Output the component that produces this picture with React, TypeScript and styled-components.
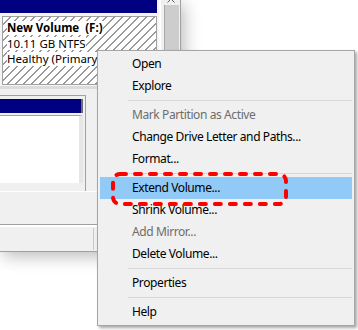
import styled, { createGlobalStyle } from 'styled-components';

const GlobalStyle = createGlobalStyle`
  html, body {
    margin: 0;
    padding: 0;
    background: #ffffff;
  }
  body {
    width: 358px;
    height: 330px;
    overflow: hidden;
  }
`;

type Item =
  | { kind: 'item'; label: string; disabled?: boolean; active?: boolean }
  | { kind: 'sep' };

const menuItems: Item[] = [
  { kind: 'item', label: 'Open' },
  { kind: 'item', label: 'Explore' },
  { kind: 'sep' },
  { kind: 'item', label: 'Mark Partition as Active', disabled: true },
  { kind: 'item', label: 'Change Drive Letter and Paths...' },
  { kind: 'item', label: 'Format...' },
  { kind: 'sep' },
  { kind: 'item', label: 'Extend Volume...', active: true },
  { kind: 'item', label: 'Shrink Volume...' },
  { kind: 'item', label: 'Add Mirror...', disabled: true },
  { kind: 'item', label: 'Delete Volume...' },
  { kind: 'sep' },
  { kind: 'item', label: 'Properties' },
  { kind: 'sep' },
  { kind: 'item', label: 'Help' },
];

export default function App(): JSX.Element {
  return (
    <>
      <GlobalStyle />
      <Stage>
        <Window>
          <TopPane>
            <DiskColumn>
              <NavyBar />
              <Partition>
                <PartLine $bold>New Volume&nbsp; (F:)</PartLine>
                <PartLine>10.11 GB NTFS</PartLine>
                <PartLine>Healthy (Primary Partition)</PartLine>
              </Partition>
            </DiskColumn>
            <ScrollBar>
              <ArrowUp viewBox="0 0 8 5" aria-hidden>
                <path d="M0.5 4.5 L4 1 L7.5 4.5" fill="none" stroke="#606060" strokeWidth="1" />
              </ArrowUp>
              <Thumb />
            </ScrollBar>
          </TopPane>

          <LowerPane>
            <ListFrame>
              <ListHeader />
              <ListBody />
            </ListFrame>
            <Gap />
            <StatusBar>
              <StatusCell />
            </StatusBar>
          </LowerPane>
        </Window>

        <ContextMenu>
          {menuItems.map((item, i) =>
            item.kind === 'sep' ? (
              <Separator key={i} />
            ) : (
              <MenuItem key={i} $disabled={item.disabled} $active={item.active}>
                {item.label}
              </MenuItem>
            )
          )}
        </ContextMenu>

        <Callout width="177" height="34" viewBox="0 0 177 34" aria-hidden>
          <rect
            x="2"
            y="2"
            width="173"
            height="30"
            rx="7"
            fill="none"
            stroke="#ff0000"
            strokeWidth="4"
            strokeDasharray="6 9"
            strokeLinecap="round"
          />
        </Callout>
      </Stage>
    </>
  );
}

const Stage = styled.div`
  position: relative;
  width: 358px;
  height: 330px;
  overflow: hidden;
  background: #ffffff;
`;

const Window = styled.div`
  width: 181px;
  height: 251px;
  display: flex;
  flex-direction: column;
  background: #f0f0f0;
  border-bottom: 1px solid #a0a0a0;
  box-shadow: 3px 4px 16px rgba(0, 0, 0, 0.28);
`;

const TopPane = styled.div`
  display: flex;
  height: 89px;
`;

const DiskColumn = styled.div`
  width: 159px;
  display: flex;
  flex-direction: column;
  background: #f4f4f4;
  border-bottom: 3px solid #dcdcdc;
  box-sizing: border-box;
`;

const NavyBar = styled.div`
  width: 157px;
  height: 13px;
  background: #000080;
  margin-bottom: 3px;
`;

const Partition = styled.div`
  margin-left: 2px;
  width: 155px;
  height: 69px;
  box-sizing: border-box;
  border: 1px solid #a0a0a0;
  padding: 4px 0 0 4px;
  overflow: hidden;
  display: flex;
  flex-direction: column;
  align-items: flex-start;
  gap: 2px;
  background: repeating-linear-gradient(
    135deg,
    #ffffff 0px,
    #ffffff 4.6px,
    #9a9a9a 4.6px,
    #9a9a9a 5.66px
  );
`;

const PartLine = styled.span<{ $bold?: boolean }>`
  font-family: 'Noto Sans', 'Liberation Sans', sans-serif;
  font-size: 11.5px;
  line-height: 13.5px;
  font-weight: ${({ $bold }) => ($bold ? 700 : 400)};
  color: #000;
  background: #ffffff;
  white-space: nowrap;
`;

const ScrollBar = styled.div`
  width: 22px;
  box-sizing: border-box;
  background: #f0f0f0;
  border-left: 2px solid #ffffff;
  border-right: 1px solid #a0a0a0;
  display: flex;
  flex-direction: column;
  align-items: center;
`;

const ArrowUp = styled.svg`
  width: 8px;
  height: 5px;
  margin-top: -2px;
`;

const Thumb = styled.div`
  margin-top: 2px;
  width: 14px;
  flex: 1;
  background: #cdcdcd;
  border-left: 1px solid #a8a8a8;
  margin-left: 1px;
`;

const LowerPane = styled.div`
  flex: 1;
  display: flex;
  flex-direction: column;
  padding-top: 6px;
`;

const ListFrame = styled.div`
  width: 86px;
  height: 96px;
  box-sizing: border-box;
  border-top: 1px solid #a0a0a0;
  border-right: 1px solid #a0a0a0;
  padding: 3px 2px 0 0;
  display: flex;
  flex-direction: column;
`;

const ListHeader = styled.div`
  width: 81px;
  height: 14px;
  background: #000080;
  border-right: 2px solid #6d6d6d;
`;

const ListBody = styled.div`
  margin-top: 2px;
  width: 79px;
  height: 67px;
  background: #ffffff;
  border-top: 1px solid #a0a0a0;
  border-right: 4px solid #e6e6e6;
`;

const Gap = styled.div`
  height: 33px;
  border-bottom: 1px solid #a0a0a0;
  box-shadow: inset 0 14px 0 -13px #ffffff;
`;

const StatusBar = styled.div`
  flex: 1;
  border-top: 2px solid #ffffff;
  display: flex;
`;

const StatusCell = styled.div`
  width: 93px;
  border-right: 1px solid #c8c8c8;
  margin: 1px 0;
`;

const ContextMenu = styled.div`
  position: absolute;
  left: 97px;
  top: 50px;
  width: 258px;
  box-sizing: border-box;
  padding: 2px;
  background: #f0f0f0;
  border: 1px solid #a6a6a6;
  box-shadow: 2px 2px 3px rgba(0, 0, 0, 0.35);
  font-family: 'Noto Sans', 'Liberation Sans', sans-serif;
  font-size: 12px;
  letter-spacing: -0.4px;
`;

const MenuItem = styled.div<{ $disabled?: boolean; $active?: boolean }>`
  height: 22px;
  line-height: 22px;
  padding-left: 32px;
  color: ${({ $disabled }) => ($disabled ? '#6d6d6d' : '#000000')};
  background: ${({ $active }) => ($active ? '#91c9f7' : 'transparent')};
  white-space: nowrap;
`;

const Separator = styled.div`
  height: 7px;
  margin-left: 28px;
  display: flex;
  align-items: center;

  &::after {
    content: '';
    flex: 1;
    height: 1px;
    background: #d7d7d7;
    margin-top: -1px;
  }
`;

const Callout = styled.svg`
  position: absolute;
  left: 111px;
  top: 172px;
  overflow: visible;
`;
